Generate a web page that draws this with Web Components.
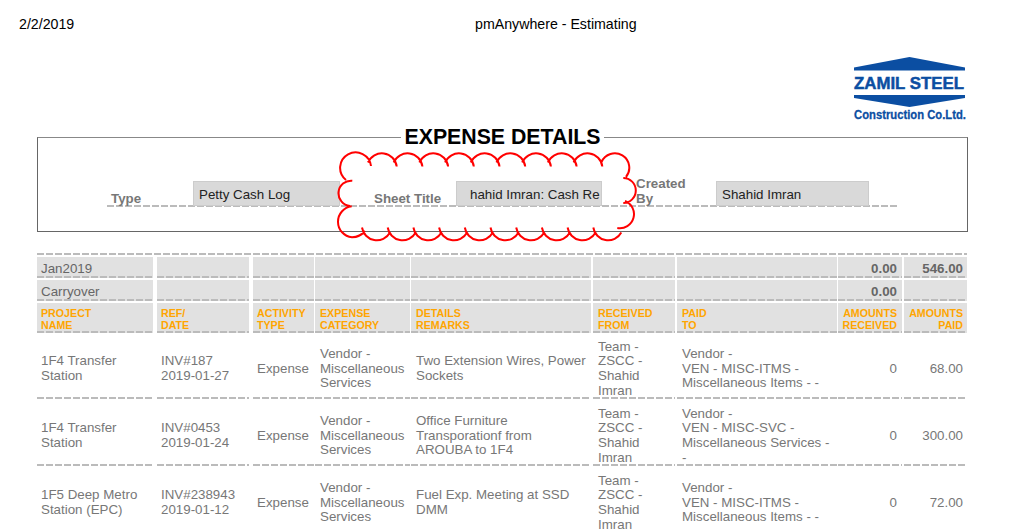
<!DOCTYPE html>
<html>
<head>
<meta charset="utf-8">
<title>pmAnywhere - Estimating</title>
<style>
html, body { margin: 0; padding: 0; height: 529px; overflow: hidden; background: #fff; }
body { font-family: "Liberation Sans", Arial, sans-serif; }
</style>
</head>
<body>
<report-header date="2/2/2019" title="pmAnywhere - Estimating"></report-header>
<zamil-logo></zamil-logo>

<expense-form legend="EXPENSE DETAILS">
  <form-field label="Type" width="147">Petty Cash Log</form-field>
  <form-field label="Sheet Title" width="146" indent="13">hahid Imran: Cash Re</form-field>
  <form-field class="narrow" label="Created By" width="153">Shahid Imran</form-field>
  <review-cloud slot="overlay"></review-cloud>
</expense-form>

<expense-table>
  <expense-row kind="sum">
    <expense-cell>Jan2019</expense-cell><expense-cell></expense-cell><expense-cell></expense-cell><expense-cell></expense-cell><expense-cell></expense-cell><expense-cell></expense-cell><expense-cell></expense-cell>
    <expense-cell num strong>0.00</expense-cell><expense-cell num strong>546.00</expense-cell>
  </expense-row>
  <expense-row kind="sum">
    <expense-cell>Carryover</expense-cell><expense-cell></expense-cell><expense-cell></expense-cell><expense-cell></expense-cell><expense-cell></expense-cell><expense-cell></expense-cell><expense-cell></expense-cell>
    <expense-cell num strong>0.00</expense-cell><expense-cell></expense-cell>
  </expense-row>
  <expense-row kind="head">
    <expense-cell>PROJECT<br>NAME</expense-cell>
    <expense-cell>REF/<br>DATE</expense-cell>
    <expense-cell>ACTIVITY<br>TYPE</expense-cell>
    <expense-cell>EXPENSE<br>CATEGORY</expense-cell>
    <expense-cell>DETAILS<br>REMARKS</expense-cell>
    <expense-cell>RECEIVED<br>FROM</expense-cell>
    <expense-cell>PAID<br>TO</expense-cell>
    <expense-cell num>AMOUNTS<br>RECEIVED</expense-cell>
    <expense-cell num>AMOUNTS<br>PAID</expense-cell>
  </expense-row>
  <expense-row>
    <expense-cell>1F4 Transfer<br>Station</expense-cell>
    <expense-cell>INV#187<br>2019-01-27</expense-cell>
    <expense-cell>Expense</expense-cell>
    <expense-cell>Vendor -<br>Miscellaneous<br>Services</expense-cell>
    <expense-cell>Two Extension Wires, Power<br>Sockets</expense-cell>
    <expense-cell>Team -<br>ZSCC -<br>Shahid<br>Imran</expense-cell>
    <expense-cell>Vendor -<br>VEN - MISC-ITMS -<br>Miscellaneous Items - -</expense-cell>
    <expense-cell num>0</expense-cell>
    <expense-cell num>68.00</expense-cell>
  </expense-row>
  <expense-row>
    <expense-cell>1F4 Transfer<br>Station</expense-cell>
    <expense-cell>INV#0453<br>2019-01-24</expense-cell>
    <expense-cell>Expense</expense-cell>
    <expense-cell>Vendor -<br>Miscellaneous<br>Services</expense-cell>
    <expense-cell>Office Furniture<br>Transporationf from<br>AROUBA to 1F4</expense-cell>
    <expense-cell>Team -<br>ZSCC -<br>Shahid<br>Imran</expense-cell>
    <expense-cell>Vendor -<br>VEN - MISC-SVC -<br>Miscellaneous Services -<br>-</expense-cell>
    <expense-cell num>0</expense-cell>
    <expense-cell num>300.00</expense-cell>
  </expense-row>
  <expense-row>
    <expense-cell>1F5 Deep Metro<br>Station (EPC)</expense-cell>
    <expense-cell>INV#238943<br>2019-01-12</expense-cell>
    <expense-cell>Expense</expense-cell>
    <expense-cell>Vendor -<br>Miscellaneous<br>Services</expense-cell>
    <expense-cell>Fuel Exp. Meeting at SSD<br>DMM</expense-cell>
    <expense-cell>Team -<br>ZSCC -<br>Shahid<br>Imran</expense-cell>
    <expense-cell>Vendor -<br>VEN - MISC-ITMS -<br>Miscellaneous Items - -</expense-cell>
    <expense-cell num>0</expense-cell>
    <expense-cell num>72.00</expense-cell>
  </expense-row>
</expense-table>

<script>
const DASH = 'repeating-linear-gradient(90deg, #bbb 0 7px, transparent 7px 9px)';

class ReportHeader extends HTMLElement {
  constructor() {
    super();
    this.attachShadow({ mode: 'open' });
    this.shadowRoot.innerHTML = `
<style>
:host { display: flex; height: 50px; padding: 16px 0 0 19px; box-sizing: border-box; font-size: 14.2px; line-height: 17px; color: #000; }
.date { width: 456px; }
</style>
<span class="date"></span><span class="title"></span>`;
  }

  connectedCallback() {
    this.shadowRoot.querySelector('.date').textContent = this.getAttribute('date');
    this.shadowRoot.querySelector('.title').textContent = this.getAttribute('title');
  }
}

class ZamilLogo extends HTMLElement {
  constructor() {
    super();
    this.attachShadow({ mode: 'open' });
    this.shadowRoot.innerHTML = `
<style>
:host { display: flex; justify-content: flex-end; padding-right: 13px; height: 72px; }
svg { display: block; width: 150px; height: 72px; }
text { fill: #0b4ea2; stroke: #0b4ea2; font-family: "Liberation Sans", Arial, sans-serif; font-weight: bold; }
</style>
<svg viewBox="850 50 150 72">
  <polygon fill="#0b4ea2" points="854,67.5 909.5,57 965,67.5 965,70.5 854,70.5"/>
  <text x="854" y="88.5" font-size="17" stroke-width="0.5" textLength="110" lengthAdjust="spacingAndGlyphs">ZAMIL STEEL</text>
  <polygon fill="#0b4ea2" points="854,95 965,95 965,98 909.5,107 854,98"/>
  <text x="854" y="118.5" font-size="13.5" stroke-width="0.3" textLength="112" lengthAdjust="spacingAndGlyphs">Construction Co.Ltd.</text>
</svg>`;
  }
}

class ExpenseForm extends HTMLElement {
  constructor() {
    super();
    this.attachShadow({ mode: 'open' });
    this.shadowRoot.innerHTML = `
<style>
:host { display: block; position: relative; margin: 3px 46px 0 37px; }
fieldset { margin: 0; padding: 0 69px 0 69px; height: 107px; box-sizing: border-box; border: 1px solid #666; border-top-color: #888; }
legend { margin: 0 auto; padding: 0 3px; font-size: 21.3px; line-height: 24px; font-weight: bold; color: #000; }
.row {
  display: grid;
  grid-template-columns: 263px 262px 266px;
  margin-top: 27px;
  padding-bottom: 2px;
  background: ${DASH} bottom / 100% 2px no-repeat;
}
</style>
<fieldset>
  <legend></legend>
  <div class="row"><slot></slot></div>
</fieldset>
<slot name="overlay"></slot>`;
  }

  connectedCallback() {
    this.shadowRoot.querySelector('legend').textContent = this.getAttribute('legend');
  }
}

class FormField extends HTMLElement {
  constructor() {
    super();
    this.attachShadow({ mode: 'open' });
    this.shadowRoot.innerHTML = `
<style>
:host { display: grid; grid-template-columns: 86px auto; align-items: end; font-size: 13.33px; }
:host(.narrow) { grid-template-columns: 84px auto; }
:host(.narrow) .label { width: 60px; }
.label { padding: 0 0 1px 4px; font-weight: bold; line-height: 15px; color: #777; margin-bottom: -2px; }
.box {
  box-sizing: border-box; height: 25px; margin-bottom: -1px; padding: 1px 0 0 5px;
  line-height: 23px; background: #d9d9d9; border: 1px solid #ccc;
  color: #222; white-space: nowrap; overflow: hidden;
}
</style>
<div class="label"></div>
<div class="box"><slot></slot></div>`;
  }

  connectedCallback() {
    this.shadowRoot.querySelector('.label').textContent = this.getAttribute('label');
    const box = this.shadowRoot.querySelector('.box');
    box.style.width = this.getAttribute('width') + 'px';
    if (this.hasAttribute('indent')) {
      box.style.paddingLeft = this.getAttribute('indent') + 'px';
    }
  }
}

// red revision cloud drawn over the form, it is transparent inside
class ReviewCloud extends HTMLElement {
  constructor() {
    super();
    this.attachShadow({ mode: 'open' });
    let d = 'M346 180 A15.5 15.5 0 1 1 371 166 ';
    for (let i = 0; i < 9; i++) {
      const end = 396.7 + i * 25.7;
      d += `M${end - 28.7} 162.5 A15 15 0 0 1 ${end} 166.5 `;
    }
    d += 'M601.5 162 A14.5 14.5 0 1 1 626 177 ';
    d += 'M623.3 178 A12.5 12.5 0 0 1 623.3 203 ';
    d += 'M625 201 A14.1 14.1 0 0 1 617.3 228 ';
    for (let i = 0; i < 10; i++) {
      const start = 362 + i * 25.7;
      d += `M${start} 227.5 A15 15 0 0 0 ${start + 28} 232.5 `;
    }
    d += 'M352.3 180.7 A12.7 12.7 0 0 0 350 206 ';
    d += 'M351.7 206.3 A15.6 15.6 0 0 0 352 237.3 Q360 237 365 231 ';
    this.shadowRoot.innerHTML = `
<style>
:host { position: absolute; left: 290px; top: 20px; width: 320px; height: 100px; pointer-events: none; }
svg { display: block; overflow: visible; }
</style>
<svg width="320" height="100" viewBox="327 145 320 100" fill="none" stroke="#f00" stroke-width="2"><path d="${d}"/></svg>`;
  }
}

class ExpenseTable extends HTMLElement {
  constructor() {
    super();
    this.attachShadow({ mode: 'open' });
    this.shadowRoot.innerHTML = `
<style>
:host { display: block; margin: 21px 46px 0 37px; font-size: 13.33px; }
.rule { height: 2px; margin-bottom: 2px; background: ${DASH}; }
</style>
<div class="rule"></div>
<slot></slot>`;
  }
}

class ExpenseRow extends HTMLElement {
  constructor() {
    super();
    this.attachShadow({ mode: 'open' });
    this.shadowRoot.innerHTML = `
<style>
:host {
  display: grid;
  grid-template-columns: 120px 96px 62px 96px 182px 84px 161px 66px 63px;
  grid-template-rows: minmax(0, 1fr);
  height: 67px;
  --cell-bg: transparent;
  --cell-color: #777;
  --cell-weight: normal;
  --cell-size: 13.33px;
  --cell-line: 14.67px;
  --cell-pad: 7px 5px 0;
}
:host([kind=sum]) {
  height: 23px;
  padding-bottom: 2px;
  box-sizing: border-box;
  --cell-bg: #e1e1e1;
  --cell-color: #666;
  --cell-pad: 4px 5px 0 4px;
}
:host([kind=head]) {
  height: 30px;
  margin-bottom: -1px;
  --cell-bg: #e1e1e1;
  --cell-color: #ffa500;
  --cell-weight: bold;
  --cell-size: 10.67px;
  --cell-line: 12px;
  --cell-pad: 2px 5px 0;
}
::slotted(:nth-child(1)), ::slotted(:nth-child(2)) { margin-right: 4px; }
::slotted(:nth-child(3)), ::slotted(:nth-child(4)), ::slotted(:nth-child(7)) { margin-right: 1px; }
::slotted(:nth-child(5)), ::slotted(:nth-child(6)), ::slotted(:nth-child(8)) { margin-right: 2px; }
::slotted(:nth-child(-n+3)) { padding-left: 4px; }
::slotted(:last-child) { padding-right: 4px; }
</style>
<slot></slot>`;
  }
}

class ExpenseCell extends HTMLElement {
  constructor() {
    super();
    this.attachShadow({ mode: 'open' });
    this.shadowRoot.innerHTML = `
<style>
:host {
  display: flex;
  align-items: center;
  box-sizing: border-box;
  min-width: 0;
  min-height: 0;
  padding: var(--cell-pad);
  color: var(--cell-color);
  font-weight: var(--cell-weight);
  font-size: var(--cell-size);
  line-height: var(--cell-line);
  background: ${DASH} bottom / 100% 2px no-repeat, var(--cell-bg);
  white-space: nowrap;
}
:host([num]) { justify-content: flex-end; text-align: right; }
:host([strong]) { font-weight: bold; }
</style>
<div><slot></slot></div>`;
  }
}

customElements.define('report-header', ReportHeader);
customElements.define('zamil-logo', ZamilLogo);
customElements.define('expense-form', ExpenseForm);
customElements.define('form-field', FormField);
customElements.define('review-cloud', ReviewCloud);
customElements.define('expense-table', ExpenseTable);
customElements.define('expense-row', ExpenseRow);
customElements.define('expense-cell', ExpenseCell);
</script>
</body>
</html>
